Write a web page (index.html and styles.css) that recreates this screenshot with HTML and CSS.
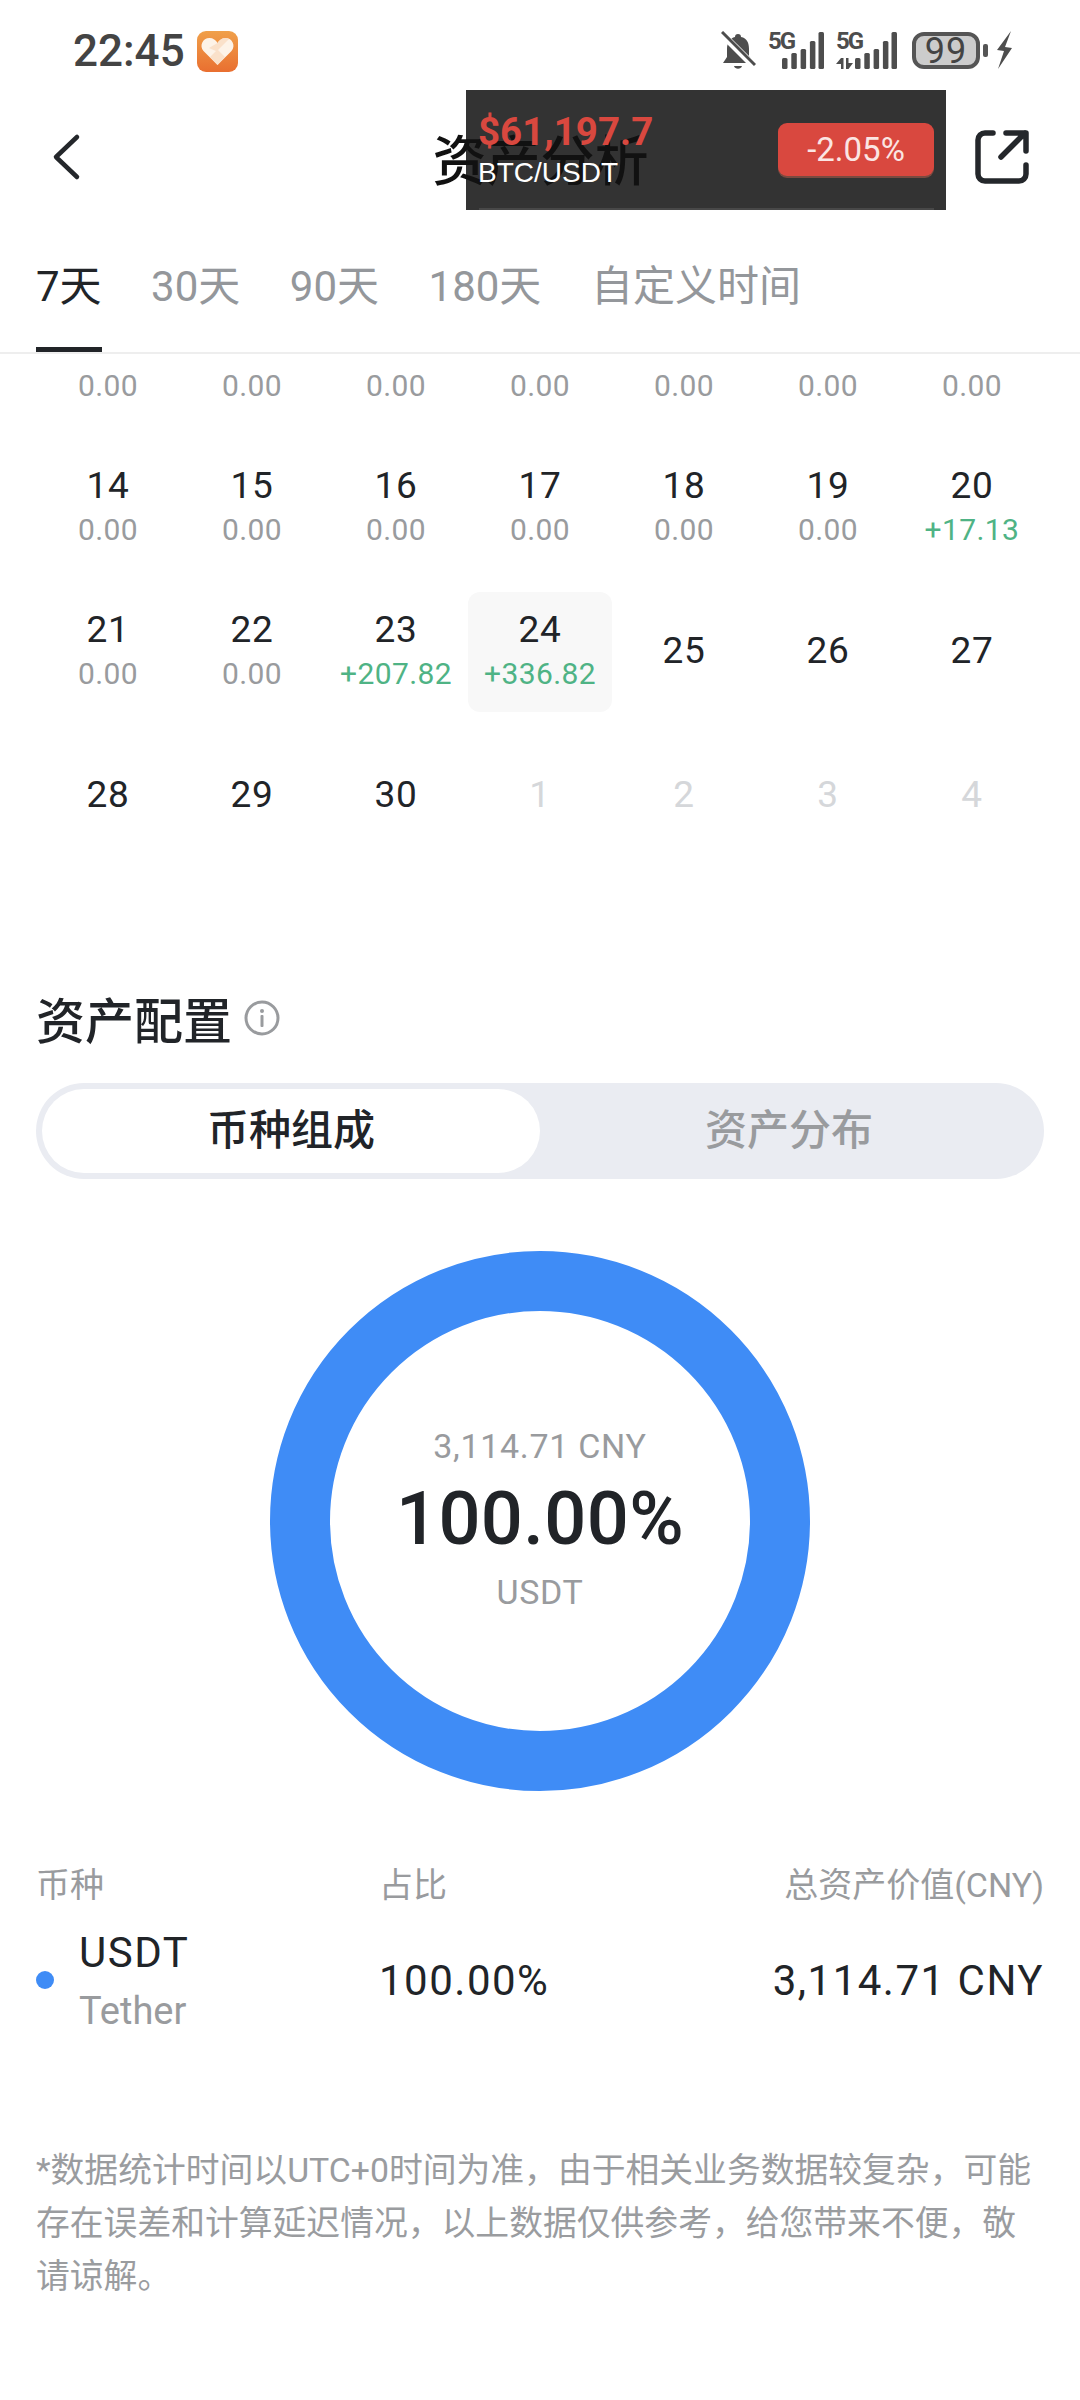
FILE: index.html
```html
<!DOCTYPE html>
<html lang="zh-CN">
<head>
    <title>资产分析</title>
    <link rel="stylesheet" href="styles.css">
</head>
<body>
    <div class="status-bar">
        <div class="status-left">
            <span class="clock">22:45</span>
            <svg class="app-badge" width="41" height="41" viewBox="0 0 41 41">
                <defs>
                    <linearGradient id="badgeBg" x1="0" y1="0" x2="0" y2="1">
                        <stop offset="0" stop-color="#f0a04a"/>
                        <stop offset="1" stop-color="#e96f30"/>
                    </linearGradient>
                </defs>
                <rect width="41" height="41" rx="9" fill="url(#badgeBg)"/>
                <path d="M20.5 34 L6.5 20 C2 15 5.5 7 12.5 7 C16 7 19 9 20.5 12 C22 9 25 7 28.5 7 C35.5 7 39 15 34.5 20 Z" fill="#fdf3e8"/>
                <path d="M12 17 L20.5 12 C22 9 25 7 28.5 7 C30 7 31 7.5 32 8 L21 19 L28 26 L20.5 34 L13 26 L19 20 Z" fill="#f8d9bd" opacity="0.7"/>
            </svg>
        </div>
        <div class="status-right">
            <svg class="bell" width="35" height="40" viewBox="0 0 35 40">
                <path d="M17 3 a3 3 0 0 1 3 3 C26 7 28 12 28 18 V25 L33 32 H2 L6 26 V18 C6 12 9 7 14 6 a3 3 0 0 1 3 -3 Z" fill="#4d4d4d"/>
                <path d="M13 35 H21 C20 38.5 14 38.5 13 35 Z" fill="#4d4d4d"/>
                <path d="M0 2 L34 36" stroke="#fff" stroke-width="7"/>
                <path d="M1 1 L34 34" stroke="#4d4d4d" stroke-width="3"/>
            </svg>
            <div class="net">
                <div class="net-label"><span>5G</span></div>
                <svg class="bars bars-first" width="42" height="37" viewBox="0 0 42 37">
                    <rect x="0" y="26" width="5.5" height="11" rx="1.5"/>
                    <rect x="9.3" y="21" width="5.5" height="16" rx="1.5"/>
                    <rect x="18.6" y="17" width="5.5" height="20" rx="1.5"/>
                    <rect x="27.9" y="9" width="5.5" height="28" rx="1.5"/>
                    <rect x="36.5" y="0" width="5.5" height="37" rx="1.5"/>
                </svg>
            </div>
            <div class="net">
                <div class="net-label">
                    <span>5G</span>
                    <svg class="arrows" width="17" height="11" viewBox="0 0 17 11">
                        <path d="M5 0 V11 H7.5 V0 Z M5 0 L0 6 H5 Z M10 0 V11 H12.5 V0 Z M12.5 11 L17 5 H12.5 Z" fill="#4d4d4d"/>
                    </svg>
                </div>
                <svg class="bars bars-second" width="42" height="37" viewBox="0 0 42 37">
                    <rect x="0" y="26" width="5.5" height="11" rx="1.5"/>
                    <rect x="9.3" y="21" width="5.5" height="16" rx="1.5"/>
                    <rect x="18.6" y="17" width="5.5" height="20" rx="1.5"/>
                    <rect x="27.9" y="9" width="5.5" height="28" rx="1.5"/>
                    <rect x="36.5" y="0" width="5.5" height="37" rx="1.5"/>
                </svg>
            </div>
            <div class="battery"><span>99</span></div>
            <div class="battery-nub"></div>
            <svg class="bolt" width="15" height="38" viewBox="0 0 15 38">
                <path d="M14 0 L0 19 L7 20 L1 38 L15 17 L8 16 Z" fill="#4d4d4d"/>
            </svg>
        </div>
    </div>

    <div class="header">
        <div class="header-icon">
            <svg width="30" height="48" viewBox="0 0 30 48">
                <path d="M25 4 L4 24 L25 44" fill="none" stroke="#24272b" stroke-width="4.5" stroke-linecap="round" stroke-linejoin="round"/>
            </svg>
        </div>
        <div class="page-title">资产分析</div>
        <div class="header-icon header-icon-right">
            <svg width="54" height="54" viewBox="0 0 54 54">
                <path d="M18 3 H10 a7 7 0 0 0 -7 7 V44 a7 7 0 0 0 7 7 H44 a7 7 0 0 0 7 -7 V35" fill="none" stroke="#24272b" stroke-width="5.5" stroke-linecap="round"/>
                <path d="M26 27 L50 3 M31 3 H51 V21" fill="none" stroke="#24272b" stroke-width="5.5" stroke-linecap="round" stroke-linejoin="round"/>
            </svg>
        </div>
        <div class="ticker">
            <div class="ticker-prices">
                <div class="ticker-price">$61,197.7</div>
                <div class="ticker-pair">BTC/USDT</div>
            </div>
            <div class="ticker-change">-2.05%</div>
        </div>
    </div>

    <div class="tabs">
        <div class="tab active">7天</div>
        <div class="tab">30天</div>
        <div class="tab">90天</div>
        <div class="tab">180天</div>
        <div class="tab">自定义时间</div>
    </div>

    <div class="calendar-clip">
        <div class="calendar">
            <div class="day"><div class="date">7</div><div class="value">0.00</div></div>
            <div class="day"><div class="date">8</div><div class="value">0.00</div></div>
            <div class="day"><div class="date">9</div><div class="value">0.00</div></div>
            <div class="day"><div class="date">10</div><div class="value">0.00</div></div>
            <div class="day"><div class="date">11</div><div class="value">0.00</div></div>
            <div class="day"><div class="date">12</div><div class="value">0.00</div></div>
            <div class="day"><div class="date">13</div><div class="value">0.00</div></div>

            <div class="day"><div class="date">14</div><div class="value">0.00</div></div>
            <div class="day"><div class="date">15</div><div class="value">0.00</div></div>
            <div class="day"><div class="date">16</div><div class="value">0.00</div></div>
            <div class="day"><div class="date">17</div><div class="value">0.00</div></div>
            <div class="day"><div class="date">18</div><div class="value">0.00</div></div>
            <div class="day"><div class="date">19</div><div class="value">0.00</div></div>
            <div class="day"><div class="date">20</div><div class="value up">+17.13</div></div>

            <div class="day"><div class="date">21</div><div class="value">0.00</div></div>
            <div class="day"><div class="date">22</div><div class="value">0.00</div></div>
            <div class="day"><div class="date">23</div><div class="value up">+207.82</div></div>
            <div class="day today"><div class="date">24</div><div class="value up">+336.82</div></div>
            <div class="day"><div class="date">25</div></div>
            <div class="day"><div class="date">26</div></div>
            <div class="day"><div class="date">27</div></div>

            <div class="day"><div class="date">28</div></div>
            <div class="day"><div class="date">29</div></div>
            <div class="day"><div class="date">30</div></div>
            <div class="day next"><div class="date">1</div></div>
            <div class="day next"><div class="date">2</div></div>
            <div class="day next"><div class="date">3</div></div>
            <div class="day next"><div class="date">4</div></div>
        </div>
    </div>

    <div class="section">
        <div class="section-title">
            <span>资产配置</span>
            <svg class="info-icon" width="36" height="36" viewBox="0 0 36 36">
                <circle cx="18" cy="18" r="16" fill="none" stroke="#999b9e" stroke-width="3"/>
                <circle cx="18" cy="11" r="2" fill="#999b9e"/>
                <rect x="16.5" y="15" width="3" height="12" rx="1" fill="#999b9e"/>
            </svg>
        </div>

        <div class="segment">
            <div class="segment-item selected">币种组成</div>
            <div class="segment-item">资产分布</div>
        </div>

        <div class="donut-wrap">
            <div class="donut">
                <div class="donut-sub">3,114.71 CNY</div>
                <div class="donut-main">100.00%</div>
                <div class="donut-sub">USDT</div>
            </div>
        </div>

        <div class="table-row table-head">
            <div>币种</div>
            <div>占比</div>
            <div class="right">总资产价值(CNY)</div>
        </div>
        <div class="table-row table-body">
            <div class="coin">
                <span class="coin-dot"></span>
                <div class="coin-text">
                    <div class="coin-name">USDT</div>
                    <div class="coin-full">Tether</div>
                </div>
            </div>
            <div class="amount">100.00%</div>
            <div class="amount right">3,114.71 CNY</div>
        </div>

        <p class="note">*数据统计时间以UTC+0时间为准，由于相关业务数据较复杂，可能存在误差和计算延迟情况，以上数据仅供参考，给您带来不便，敬请谅解。</p>
    </div>
</body>
</html>
```

FILE: styles.css
```css
* {
    box-sizing: border-box;
}
body {
    margin: 0;
    background-color: #fff;
    color: #212428;
    font-family: Roboto, "Noto Sans CJK SC", sans-serif;
}

/* status bar */
.status-bar {
    height: 90px;
    padding: 12px 68px 0 73px;
    display: flex;
    justify-content: space-between;
    align-items: center;
}
.status-left {
    display: flex;
    align-items: center;
    gap: 12px;
}
.clock {
    font-size: 44px;
    font-weight: 500;
    color: #444;
    line-height: 50px;
}
.status-right {
    display: flex;
    align-items: flex-end;
    height: 40px;
}
.bell {
    margin-right: 12px;
}
.net {
    display: flex;
    align-items: flex-end;
    height: 38px;
    margin-right: 12px;
    margin-bottom: 2px;
}
.net-label {
    width: 25px;
    height: 38px;
    display: flex;
    flex-direction: column;
    justify-content: space-between;
    font-size: 24px;
    line-height: 20px;
    font-weight: 700;
    letter-spacing: -2px;
    color: #4d4d4d;
}
.arrows {
    display: block;
}
.bars {
    fill: #4d4d4d;
}
.bars-first {
    margin-left: -11px;
}
.bars-second {
    margin-left: -6px;
}
.battery {
    width: 68px;
    height: 37px;
    margin-left: 3px;
    margin-bottom: 2px;
    border: 4px solid #555;
    border-radius: 12px;
    background-color: #ccc;
    display: flex;
    align-items: center;
    justify-content: center;
    font-size: 36px;
    letter-spacing: 1px;
    color: #444;
}
.battery-nub {
    width: 5px;
    height: 13px;
    margin: 0 9px 14px 3px;
    background-color: #555;
    border-radius: 2px;
}
.bolt {
    margin-bottom: 2px;
}

/* header */
.header {
    position: relative;
    height: 134px;
    padding: 0 51px 0 52px;
    display: flex;
    align-items: center;
}
.header-icon {
    width: 54px;
    display: flex;
}
.header-icon-right {
    justify-content: flex-end;
}
.page-title {
    position: relative;
    z-index: 1;
    flex: 1;
    text-align: center;
    font-size: 54px;
    font-weight: 500;
    color: #111;
}
.ticker {
    position: absolute;
    left: 466px;
    top: 0;
    width: 480px;
    height: 120px;
    padding: 20px 12px 0 12px;
    background-color: #333;
    display: flex;
    justify-content: space-between;
    align-items: flex-start;
}
.ticker::after {
    content: "";
    position: absolute;
    left: 13px;
    right: 12px;
    bottom: 0;
    height: 2px;
    background-color: #484848;
}
.ticker-prices {
    position: relative;
    z-index: 2;
}
.ticker-price {
    font-size: 38.5px;
    line-height: 44px;
    font-weight: 700;
    color: #d9483f;
}
.ticker-pair {
    font-family: "Liberation Sans", Arial, sans-serif;
    font-size: 28px;
    line-height: 37px;
    color: #fff;
}
.ticker-change {
    position: relative;
    z-index: 2;
    width: 156px;
    height: 53px;
    margin-top: 13px;
    background-color: #d9483f;
    border-radius: 9px;
    box-shadow: 0 2px 0 #7a4a40;
    text-align: center;
    font-size: 33px;
    line-height: 53px;
    color: #fbe5e3;
}

/* tabs */
.tabs {
    position: relative;
    height: 130px;
    margin-bottom: -2px;
    padding: 0 36px;
    display: flex;
    gap: 49.5px;
    border-bottom: 2px solid #eee;
}
.tab {
    height: 128px;
    padding-top: 33px;
    font-size: 42px;
    line-height: 60px;
    color: #94979b;
}
.tab.active {
    color: #212428;
    border-bottom: 5px solid #212428;
}

/* calendar */
.calendar-clip {
    overflow: hidden;
    height: 504px;
}
.calendar {
    margin-top: -48px;
    padding: 0 36px;
    display: grid;
    grid-template-columns: repeat(7, 144px);
    grid-auto-rows: 120px;
    row-gap: 24px;
}
.day {
    display: flex;
    flex-direction: column;
    justify-content: center;
    align-items: center;
    padding-bottom: 2px;
    border-radius: 12px;
}
.day.today {
    background-color: #f8f8f8;
}
.date {
    font-size: 37px;
    line-height: 44px;
    letter-spacing: 0.6px;
    color: #212428;
}
.day.next .date {
    color: #d5d7da;
}
.value {
    font-size: 30px;
    line-height: 43px;
    letter-spacing: 0.4px;
    color: #999b9e;
}
.value.up {
    color: #4fb385;
}

/* asset section */
.section {
    padding: 131px 36px 0;
}
.section-title {
    display: flex;
    align-items: center;
    gap: 12px;
    height: 60px;
    font-size: 49px;
    font-weight: 500;
}
.info-icon {
    margin-top: 2px;
}
.segment {
    margin-top: 36px;
    height: 96px;
    padding: 6px;
    border-radius: 48px;
    background-color: #eaecf2;
    display: flex;
}
.segment-item {
    width: 498px;
    border-radius: 42px;
    text-align: center;
    font-size: 42px;
    font-weight: 500;
    line-height: 84px;
    color: #999b9e;
}
.segment-item.selected {
    background-color: #fff;
    color: #212428;
}
.donut-wrap {
    margin-top: 72px;
    display: flex;
    justify-content: center;
}
.donut {
    width: 540px;
    height: 540px;
    border: 60px solid #3f8cf6;
    border-radius: 50%;
    display: flex;
    flex-direction: column;
    align-items: center;
    justify-content: center;
}
.donut-sub {
    font-size: 34px;
    line-height: 46px;
    letter-spacing: 0.7px;
    color: #999b9e;
}
.donut-sub:first-child {
    margin-top: -4px;
}
.donut-main {
    font-size: 74px;
    line-height: 100px;
    letter-spacing: 0.4px;
    font-weight: 500;
}
.table-row {
    display: grid;
    grid-template-columns: 343px 1fr auto;
    align-items: center;
}
.table-head {
    margin-top: 66px;
    height: 50px;
    font-size: 34px;
    color: #999b9e;
}
.table-body {
    margin-top: 13px;
    height: 120px;
}
.right {
    text-align: right;
}
.coin {
    display: flex;
    align-items: center;
    gap: 25px;
}
.coin-dot {
    width: 18px;
    height: 18px;
    border-radius: 50%;
    background-color: #3f8cf6;
}
.coin-text {
    padding-top: 3px;
}
.coin-name {
    font-size: 42px;
    line-height: 58px;
    letter-spacing: 1.5px;
}
.coin-full {
    font-size: 38px;
    line-height: 58px;
    color: #999b9e;
}
.amount {
    font-size: 42px;
    letter-spacing: 1.5px;
}
.note {
    margin: 104px 0 0;
    font-size: 33.8px;
    line-height: 53px;
    color: #9a9c9f;
}
```
